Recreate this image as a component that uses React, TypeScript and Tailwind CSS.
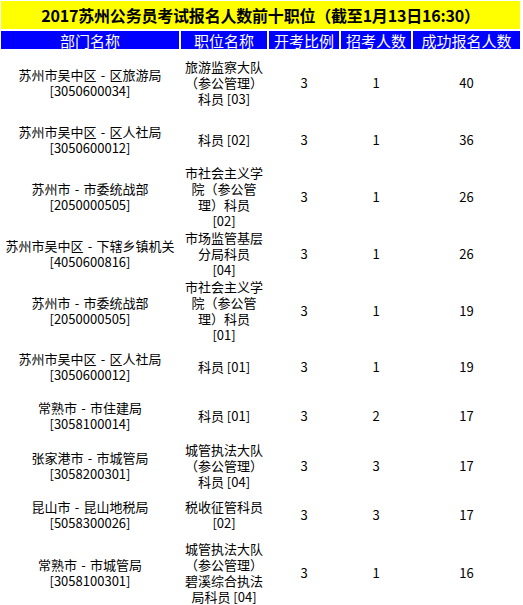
import React from 'react'

const headers = ['部门名称', '职位名称', '开考比例', '招考人数', '成功报名人数']

// row heights are taken from the screenshot, the table uses fixed rows
const rows = [
  { dept: ['苏州市吴中区', '区旅游局'], code: '[3050600034]', job: ['旅游监察大队', '（参公管理）', '科员 [03]'], ratio: 3, plan: 1, applied: 40, h: 'h-[64px]' },
  { dept: ['苏州市吴中区', '区人社局'], code: '[3050600012]', job: ['科员 [02]'], ratio: 3, plan: 1, applied: 36, h: 'h-[46px]' },
  { dept: ['苏州市', '市委统战部'], code: '[2050000505]', job: ['市社会主义学', '院（参公管', '理）科员', '[02]'], ratio: 3, plan: 1, applied: 26, h: 'h-[64px]' },
  { dept: ['苏州市吴中区', '下辖乡镇机关'], code: '[4050600816]', job: ['市场监管基层', '分局科员', '[04]'], ratio: 3, plan: 1, applied: 26, h: 'h-[46px]' },
  { dept: ['苏州市', '市委统战部'], code: '[2050000505]', job: ['市社会主义学', '院（参公管', '理）科员', '[01]'], ratio: 3, plan: 1, applied: 19, h: 'h-[64px]' },
  { dept: ['苏州市吴中区', '区人社局'], code: '[3050600012]', job: ['科员 [01]'], ratio: 3, plan: 1, applied: 19, h: 'h-[44px]' },
  { dept: ['常熟市', '市住建局'], code: '[3058100014]', job: ['科员 [01]'], ratio: 3, plan: 2, applied: 17, h: 'h-[50px]' },
  { dept: ['张家港市', '市城管局'], code: '[3058200301]', job: ['城管执法大队', '（参公管理）', '科员 [04]'], ratio: 3, plan: 3, applied: 17, h: 'h-[46px]' },
  { dept: ['昆山市', '昆山地税局'], code: '[5058300026]', job: ['税收征管科员', '[02]'], ratio: 3, plan: 3, applied: 17, h: 'h-[48px]' },
  { dept: ['常熟市', '市城管局'], code: '[3058100301]', job: ['城管执法大队', '（参公管理）', '碧溪综合执法', '局科员 [04]'], ratio: 3, plan: 1, applied: 16, h: 'h-[64px]' },
]

const cell = 'flex flex-col items-center justify-center text-center'

export default function App() {
  return (
    <div className="w-[523px] h-[605px] overflow-hidden bg-white pl-[1px] pt-[1px] font-['Noto_Sans_CJK_SC',sans-serif] text-black">
      <div className="grid grid-cols-[178px_86px_70px_70px_107px] gap-[2px]">
        <div className="col-span-5 h-[28px] bg-[#ffff00] flex items-center justify-center text-[16px] font-bold leading-none tracking-[-0.2px]">
          2017苏州公务员考试报名人数前十职位（截至1月13日16:30）
        </div>

        {headers.map((t) => (
          <div key={t} className="h-[18px] bg-[#0000ff] text-white text-[15px] leading-none flex items-center justify-center">
            {t}
          </div>
        ))}

        {rows.map((r, i) => (
          <React.Fragment key={i}>
            <div className={`${cell} ${r.h} text-[13px] leading-[16px]`}>
              <span className="whitespace-nowrap">
                {r.dept[0]}
                <span className="inline-block w-[13px] text-center">-</span>
                {r.dept[1]}
              </span>
              <span>{r.code}</span>
            </div>
            <div className={`${cell} ${r.h} text-[13px] leading-[16px]`}>
              {r.job.map((l) => (
                <span key={l} className="whitespace-nowrap">{l}</span>
              ))}
            </div>
            <div className={`${cell} ${r.h} text-[13px]`}>{r.ratio}</div>
            <div className={`${cell} ${r.h} text-[13px]`}>{r.plan}</div>
            <div className={`${cell} ${r.h} text-[13px]`}>{r.applied}</div>
          </React.Fragment>
        ))}
      </div>
    </div>
  )
}
